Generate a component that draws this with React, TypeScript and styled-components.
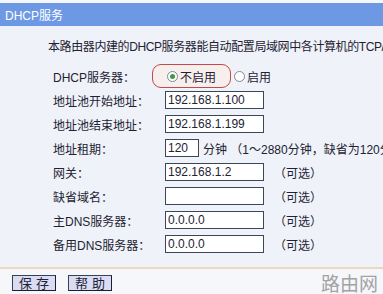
import React from "react";
import styled, { createGlobalStyle } from "styled-components";

const Global = createGlobalStyle`
  html, body { margin: 0; padding: 0; }
  body {
    width: 383px;
    height: 294px;
    overflow: hidden;
    background: #f5f5f5;
    font-family: "Liberation Sans", "Noto Sans CJK SC", sans-serif;
    font-size: 12px;
    color: #1e2233;
  }
`;

const Page = styled.div`
  width: 383px;
  height: 294px;
  padding-top: 3px;
  box-sizing: border-box;
  background: #f6f7fa;
  overflow: hidden;
`;

const TitleBar = styled.div`
  height: 23px;
  background: #6d99e4;
  color: #ffffff;
  display: flex;
  align-items: center;
  padding-left: 5px;
  font-size: 12px;
`;

const Content = styled.div`
  background: #eff2f8;
  padding-bottom: 11px;
  border-bottom: 2px solid #ead9bd;
`;

const Intro = styled.div`
  height: 38px;
  padding-left: 48px;
  display: flex;
  align-items: center;
  white-space: nowrap;
  font-size: 12px;
  letter-spacing: -0.4px;
  padding-top: 1px;
  box-sizing: border-box;
`;

const Form = styled.div`
  display: grid;
  grid-template-columns: 112px 1fr;
  padding-left: 53px;
  grid-auto-rows: 24px;
`;

const Label = styled.div`
  display: flex;
  align-items: center;
  white-space: nowrap;
`;

const Control = styled.div`
  display: flex;
  align-items: center;
  white-space: nowrap;
  gap: 6px;
`;

const RadioGroup = styled.div`
  display: flex;
  align-items: center;
  margin-left: -13px;
`;

const Highlight = styled.div`
  display: flex;
  align-items: center;
  height: 24px;
  box-sizing: border-box;
  width: 79px;
  padding-left: 14px;
  border: 1px solid #c44a4a;
  border-radius: 9px;
  background: #f7eeee;
`;

const RadioOption = styled.label<{ $offset?: number }>`
  display: flex;
  align-items: center;
  gap: 2px;
  margin-left: ${(p) => p.$offset ?? 0}px;
`;

const RadioDot = styled.span<{ $checked?: boolean }>`
  width: 11px;
  height: 11px;
  border-radius: 50%;
  border: 1px solid #7c8a99;
  background: #ffffff;
  box-sizing: border-box;
  display: inline-flex;
  align-items: center;
  justify-content: center;
  &::after {
    content: "";
    width: 5px;
    height: 5px;
    border-radius: 50%;
    background: ${(p) => (p.$checked ? "#3f9a45" : "transparent")};
  }
`;

const Field = styled.input<{ $w?: number }>`
  width: ${(p) => p.$w ?? 99}px;
  height: 18px;
  box-sizing: border-box;
  margin: 0;
  padding: 0 0 0 2px;
  border: 1px solid #3b4656;
  background: #ffffff;
  font-family: "Liberation Sans", sans-serif;
  font-size: 12px;
  color: #1e2233;
  outline: none;
`;

const Note = styled.span<{ $tight?: boolean }>`
  margin-left: ${(p) => (p.$tight ? -2 : 4)}px;
`;

const Footer = styled.div`
  display: flex;
  align-items: flex-start;
  justify-content: space-between;
  padding: 6px 5px 0 12px;
`;

const Buttons = styled.div`
  display: flex;
  gap: 12px;
`;

const Button = styled.button`
  width: 44px;
  height: 16px;
  padding: 0;
  margin: 0;
  box-sizing: border-box;
  border: 1px solid #3c3f52;
  border-right-color: #1d1f2c;
  border-bottom-color: #1d1f2c;
  background: #d9dcf3;
  font-family: "Noto Sans CJK SC", sans-serif;
  font-size: 13px;
  line-height: 14px;
  letter-spacing: 4px;
  text-indent: 4px;
  color: #1e2233;
`;

const Watermark = styled.span`
  font-family: "Noto Sans CJK SC", sans-serif;
  font-size: 19px;
  line-height: 21px;
  color: #a3a3a3;
  margin-top: -3px;
`;

const rows: { label: string; value: string; note?: string; w?: number; tight?: boolean }[] = [
  { label: "地址池开始地址：", value: "192.168.1.100" },
  { label: "地址池结束地址：", value: "192.168.1.199" },
  { label: "地址租期：", value: "120", w: 34, note: "分钟 （1～2880分钟，缺省为120分钟）", tight: true },
  { label: "网关：", value: "192.168.1.2", note: "（可选）" },
  { label: "缺省域名：", value: "", note: "（可选）" },
  { label: "主DNS服务器：", value: "0.0.0.0", note: "（可选）" },
  { label: "备用DNS服务器：", value: "0.0.0.0", note: "（可选）" },
];

export default function App() {
  return (
    <>
      <Global />
      <Page>
        <TitleBar>DHCP服务</TitleBar>
        <Content>
          <Intro>本路由器内建的DHCP服务器能自动配置局域网中各计算机的TCP/IP协议。</Intro>
          <Form>
            <Label>DHCP服务器：</Label>
            <Control>
              <RadioGroup>
                <Highlight>
                  <RadioOption>
                    <RadioDot $checked />
                    不启用
                  </RadioOption>
                </Highlight>
                <RadioOption $offset={3}>
                  <RadioDot />
                  启用
                </RadioOption>
              </RadioGroup>
            </Control>
            {rows.map((r) => (
              <React.Fragment key={r.label}>
                <Label>{r.label}</Label>
                <Control>
                  <Field readOnly defaultValue={r.value} $w={r.w} />
                  {r.note && <Note $tight={r.tight}>{r.note}</Note>}
                </Control>
              </React.Fragment>
            ))}
          </Form>
        </Content>
        <Footer>
          <Buttons>
            <Button>保存</Button>
            <Button>帮助</Button>
          </Buttons>
          <Watermark>路由网</Watermark>
        </Footer>
      </Page>
    </>
  );
}
